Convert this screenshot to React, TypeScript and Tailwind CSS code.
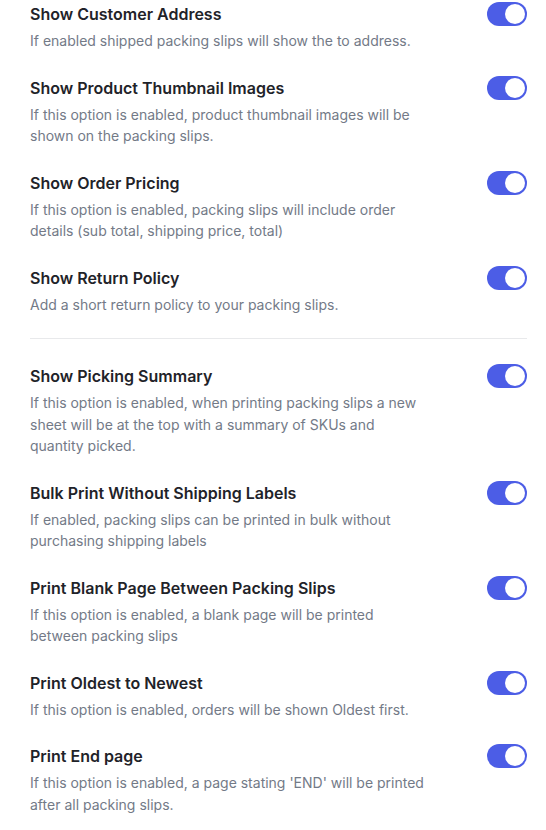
const groups = [
  [
    { title: 'Show Customer Address', description: 'If enabled shipped packing slips will show the to address.' },
    { title: 'Show Product Thumbnail Images', description: 'If this option is enabled, product thumbnail images will be shown on the packing slips.' },
    { title: 'Show Order Pricing', description: 'If this option is enabled, packing slips will include order details (sub total, shipping price, total)' },
    { title: 'Show Return Policy', description: 'Add a short return policy to your packing slips.' },
  ],
  [
    { title: 'Show Picking Summary', description: 'If this option is enabled, when printing packing slips a new sheet will be at the top with a summary of SKUs and quantity picked.' },
    { title: 'Bulk Print Without Shipping Labels', description: 'If enabled, packing slips can be printed in bulk without purchasing shipping labels' },
    { title: 'Print Blank Page Between Packing Slips', description: 'If this option is enabled, a blank page will be printed between packing slips' },
    { title: 'Print Oldest to Newest', description: 'If this option is enabled, orders will be shown Oldest first.' },
    { title: 'Print End page', description: "If this option is enabled, a page stating 'END' will be printed after all packing slips." },
  ],
];

function Toggle() {
  return (
    <button type="button" className="relative flex h-6 w-10 shrink-0 items-center rounded-full bg-[#4c5de6]">
      <span className="absolute right-[2px] h-5 w-5 rounded-full bg-white" />
    </button>
  );
}

function SettingRow({ title, description }: { title: string; description: string }) {
  return (
    <div className="flex items-start justify-between">
      <div className="max-w-[400px]">
        <h4 className="text-base leading-6 font-semibold text-[#1f2329]">{title}</h4>
        <p className="mt-1 text-sm leading-[21.5px] text-[#737a87]">{description}</p>
      </div>
      <Toggle />
    </div>
  );
}

export default function App() {
  return (
    <div className="min-h-screen bg-white pt-[2px] pl-[30px] pr-[19px]" style={{ fontFamily: 'Inter, "Noto Sans", sans-serif' }}>
      <div className="flex flex-col gap-6">
        {groups[0].map((s) => (
          <SettingRow key={s.title} {...s} />
        ))}
      </div>
      <div className="mt-[23px] mb-[25px] h-px bg-[#e8e9eb]" />
      <div className="flex flex-col gap-6">
        {groups[1].map((s) => (
          <SettingRow key={s.title} {...s} />
        ))}
      </div>
    </div>
  );
}
